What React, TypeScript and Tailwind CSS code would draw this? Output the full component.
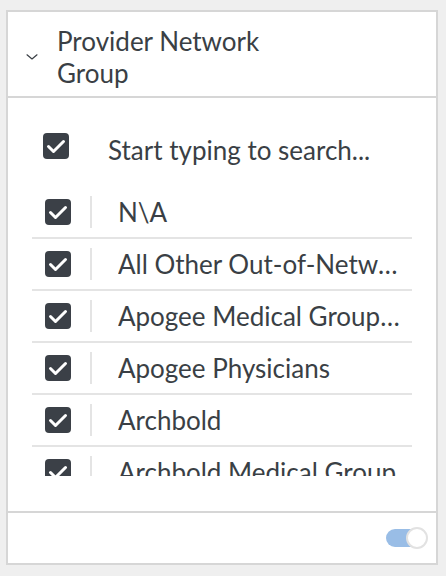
import React from 'react';

const items = [
  'N\\A',
  'All Other Out-of-Network Providers',
  'Apogee Medical Group Inc.',
  'Apogee Physicians',
  'Archbold',
  'Archbold Medical Group',
  'Ascension Medical Group',
];

function Checkbox() {
  return (
    <span className="w-[26px] h-[26px] shrink-0 rounded-[4px] bg-[#3b4047] flex items-center justify-center">
      <svg width="26" height="26" viewBox="0 0 26 26" fill="none">
        <path d="M5.5 13.5 L10.5 18.5 L20.5 8.5" stroke="#fff" strokeWidth="3" strokeLinecap="round" strokeLinejoin="round" />
      </svg>
    </span>
  );
}

function Toggle() {
  return (
    <span className="relative block w-[42px] h-[22px]">
      <span className="absolute left-0 top-[2px] w-[36px] h-[18px] rounded-full bg-[#99bde6]" />
      <span className="absolute right-0 top-0 w-[22px] h-[22px] rounded-full bg-white border-2 border-[#e2e2e2]" />
    </span>
  );
}

export default function App() {
  return (
    <div className="min-h-screen bg-[#efefef] pt-[10px] pl-[6px] font-['Lato',sans-serif] text-[#3a3f45]">
      <div className="w-[432px] h-[555px] bg-white border-2 border-[#d6d6d6] flex flex-col">
        <div className="flex items-center pl-[18px] pt-[13px] pb-[7px] border-b-2 border-[#d6d6d6]">
          <svg width="12" height="6" viewBox="0 0 12 6" fill="none" className="shrink-0">
            <path d="M1 0.8 L6 5 L11 0.8" stroke="#3a3f45" strokeWidth="1.2" strokeLinecap="round" strokeLinejoin="round" />
          </svg>
          <div className="ml-[19px] max-w-[240px] text-[26px] leading-8">Provider Network Group</div>
        </div>

        <div className="flex-1 px-[24px] pt-[35px]">
          <div className="flex items-center h-[26px] pl-[11px]">
            <Checkbox />
            <span className="ml-[39px] pt-[8px] text-[26px] leading-none">Start typing to search...</span>
          </div>

          <div className="mt-[28px] w-[380px] h-[289px] overflow-hidden">
            {items.map((item) => (
              <div key={item} className="h-[52px] border-b-2 border-[#e4e4e4] flex items-center pl-[13px] pr-[12px]">
                <Checkbox />
                <span className="ml-[19px] w-[2px] h-[32px] bg-[#e4e4e4] shrink-0" />
                <span className="ml-[26px] flex-1 min-w-0 truncate text-[26px] leading-8">{item}</span>
              </div>
            ))}
          </div>
        </div>

        <div className="h-[52px] border-t-2 border-[#d6d6d6] flex items-center justify-end pr-[8px]">
          <Toggle />
        </div>
      </div>
    </div>
  );
}
